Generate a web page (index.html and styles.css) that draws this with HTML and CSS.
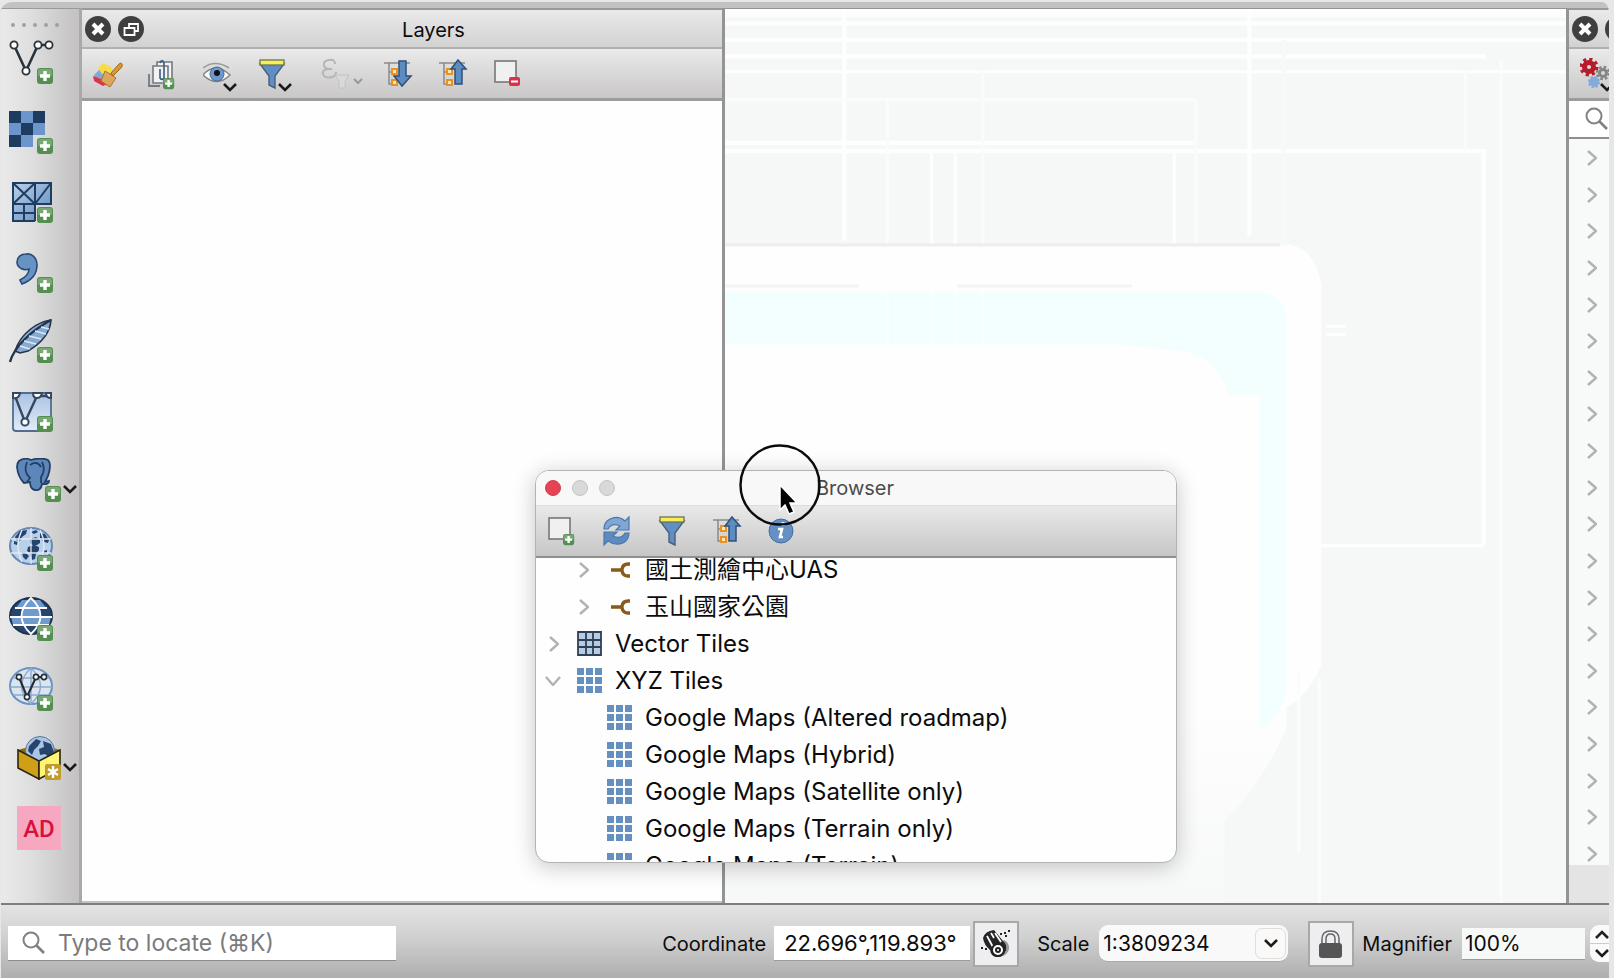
FILE: index.html
```html
<!DOCTYPE html>
<html lang="en">
<head>
<meta charset="utf-8">
<title>Layers and Browser</title>
<link rel="stylesheet" href="styles.css">
</head>
<body>
<svg class="defs" aria-hidden="true">
  <defs>
    <linearGradient id="blue" x1="0" y1="0" x2="1" y2="1"><stop offset="0" stop-color="#b9cfe8"/><stop offset="1" stop-color="#5f8cbf"/></linearGradient>
    <linearGradient id="pale" x1="0" y1="0" x2="0" y2="1"><stop offset="0" stop-color="#a9c2e2"/><stop offset="1" stop-color="#e2ecf8"/></linearGradient>
    <linearGradient id="fade" x1="0" y1="0" x2="0" y2="1"><stop offset="0" stop-color="#fdfefd"/><stop offset=".7" stop-color="#fdfefd"/><stop offset="1" stop-color="#f7f9f8"/></linearGradient>
    <g id="plus"><rect width="16" height="16" rx="3" fill="#558f50"/><path d="M1 8V3q0-2 2-2h10q2 0 2 2v5z" fill="#78a873"/><path d="M8 3v10M3 8h10" stroke="#fff" stroke-width="3.4"/></g>
    <g id="down"><path d="M1 1l6 6 6-6" fill="none" stroke="#1b1b1b" stroke-width="2.6"/></g>
    <g id="funnel"><path d="M1 5h24L16 17v12l-6-3v-9z" fill="#5f8fc4" stroke="#4a6078" stroke-width="1.4"/><rect x="1" y="1" width="24" height="5" fill="#f6ef58" stroke="#6e7254" stroke-width="1.3"/></g>
    <g id="tree"><path d="M0 3h26M5 3v21h5M5 12h5" fill="none" stroke="#8a8a8a" stroke-width="1.5"/><rect x="8" y="9" width="5" height="5" fill="#fce9b0" stroke="#e8932a" stroke-width="2"/><rect x="8" y="20" width="5" height="5" fill="#fce9b0" stroke="#e8932a" stroke-width="2"/></g>
    <g id="up"><path d="M19 1l8 9h-4v15h-7V10h-4z" fill="#5d8cc0" stroke="#2f5078" stroke-width="1.5"/></g>
    <g id="lens"><circle cx="9" cy="9" r="7.5" fill="none" stroke="#818181" stroke-width="2"/><path d="M14 14l8 8" stroke="#818181" stroke-width="2.6"/></g>
    <g id="tiles" fill="#658fbe"><path d="M0 0h7v7H0zM9 0h7v7H9zM18 0h7v7h-7zM0 9h7v7H0zM9 9h7v7H9zM18 9h7v7h-7zM0 18h7v7H0zM9 18h7v7H9zM18 18h7v7h-7z"/></g>
    <g id="share"><path d="M0 10h10M19 4h-2q-5 0-6 5v2q1 5 6 5h2" fill="none" stroke="#8a5a19" stroke-width="3.4"/></g>
    <g id="right"><path d="M1 1l8 7-8 7" fill="none" stroke="#b2b2b2" stroke-width="2.4"/></g>
    <g id="land"><path d="M6 10l5-6 7-1-1 4-4 3-2 4-4-1zM5 14l4 1-1 3-3-1zM13 25l4 1 3 3-3 4-3-3zM22 5l5-2 2 2-4 2zM21 12l6-2 4 3 0 3-3 2-3 1-4-3zM19 20l6-2 5 2 0 3-3 4-1 5-3 1-2-7-3-2zM31 6l5 1 4 6-1 3-4-1-4-4zM34 24l4-1 0 3-3 1z" fill="#27456c"/></g>
    <g id="close"><circle cx="13" cy="13" r="13" fill="#3f3f3f"/><path d="M8 8l10 10M18 8L8 18" stroke="#fff" stroke-width="4"/></g>
  </defs>
</svg>

<div class="app">
  <div class="workspace">
    <nav class="sources" aria-label="Add layer">
      <span class="grip" aria-hidden="true"><i></i><i></i><i></i><i></i><i></i></span>
      <div class="source-list">
      <button class="source" aria-label="Add vector layer"><svg viewBox="0 0 68 44"><path d="M5 5l12 26L29 5h11" fill="none" stroke="#28333b" stroke-width="2.6"/><g fill="#fff" stroke="#28333b" stroke-width="1.8"><circle cx="5" cy="5" r="3.6"/><circle cx="17" cy="31" r="3.6"/><circle cx="29" cy="5" r="3.6"/><circle cx="40" cy="5" r="3.6"/></g><use href="#plus" x="28" y="28"/></svg></button>
      <button class="source" aria-label="Add raster layer"><svg viewBox="0 0 68 44"><path d="M0 1h36v24H24v12H0z" fill="#6b95cb"/><path d="M0 1h12v12H0zM24 1h12v12H24zM12 13h12v12H12zM0 25h12v12H0z" fill="#1e3c60"/><use href="#plus" x="28" y="28"/></svg></button>
      <button class="source" aria-label="Add mesh layer"><svg viewBox="0 0 68 44"><path d="M4 4h38v21H26v17H4z" fill="url(#blue)"/><path d="M4 4h38v21H4zM4 4l22 21M26 4L4 25M26 4v38M42 4L26 25M4 25v17h22M4 34h22M15 25v17" fill="none" stroke="#1f3d63" stroke-width="2"/><use href="#plus" x="28" y="28"/></svg></button>
      <button class="source" aria-label="Add delimited text layer"><svg viewBox="0 0 68 44"><path d="M17 5c6-1 11 4 11 11 0 10-7 16-15 19l-2-4c6-3 9-6 9-11-5 2-12-1-12-7 0-5 4-8 9-8z" fill="#6792c4" stroke="#294a75" stroke-width="1.6"/><use href="#plus" x="28" y="28"/></svg></button>
      <button class="source" aria-label="Add SpatiaLite layer"><svg viewBox="0 0 68 44"><path d="M42 1C28 3 12 14 6 32l5 2 8-2C31 25 41 16 42 1z" fill="#86aad2" stroke="#25364c" stroke-width="1.6"/><path d="M1 43C5 28 22 12 42 1" fill="none" stroke="#25364c" stroke-width="2.4"/><path d="M11 27l10 3M15 22l12 3M20 17l12 3M26 12l11 3M32 8l8 2" stroke="#dce9f7" stroke-width="1.4"/><use href="#plus" x="28" y="28"/></svg></button>
      <button class="source" aria-label="Add virtual layer"><svg viewBox="0 0 68 44"><rect x="4" y="5" width="38" height="38" rx="3" fill="url(#pale)" stroke="#526d91" stroke-width="1.8"/><path d="M6 8l10 26L28 8h12" fill="none" stroke="#344961" stroke-width="2.4"/><g fill="#fff" stroke="#344961" stroke-width="2"><path d="M4 9V5h7q-1 6-7 5zM24 5h9q-1 5-5 5t-4-5zM37 5h5v5q-5 0-5-5z"/><circle cx="16" cy="34" r="3.6"/></g><use href="#plus" x="28" y="28"/></svg></button>
      <button class="source" aria-label="Add PostGIS layer"><svg viewBox="0 0 68 44"><path d="M10 3q6-4 12-1 10-3 17 0 4 4 0 16l-3 6 4-1q0 4-7 3-1 7-7 6-5-1-5-8l-6 1Q9 19 8 9q0-4 2-6z" fill="#5d87bb" stroke="#243f64" stroke-width="1.8"/><path d="M18 4q-4 10 3 16l-3 4M33 4q4 8-1 15v6M21 7q7-5 11 2" fill="none" stroke="#243f64" stroke-width="1.8"/><use href="#plus" x="36" y="28"/><use href="#down" x="54" y="27"/></svg></button>
      <button class="source" aria-label="Add WMS layer"><svg viewBox="0 0 68 44"><ellipse cx="22" cy="19" rx="21" ry="18" fill="#b9d0ea" stroke="#6489b5" stroke-width="2"/><use href="#land"/><path d="M2 12h40M2 26h40M22 1v36M13 3q-8 16 0 32M31 3q8 16 0 32" fill="none" stroke="#dfeaf7" stroke-width="1.3"/><use href="#plus" x="28" y="28"/></svg></button>
      <button class="source" aria-label="Add WCS layer"><svg viewBox="0 0 68 44"><ellipse cx="22" cy="19" rx="21" ry="18" fill="#26456d" stroke="#20334d" stroke-width="2"/><path d="M13 3h18l6 8H7zM2 20h40l-2 8H4zM13 11h18v9H13z" fill="#6f9bce"/><path d="M13 28h18l-9 8z" fill="#26456d"/><path d="M6 11h32M1 20h42M4 28h36M22 1q-19 18 0 36 19-18 0-36z" fill="none" stroke="#fff" stroke-width="1.8"/><use href="#plus" x="28" y="28"/></svg></button>
      <button class="source" aria-label="Add WFS layer"><svg viewBox="0 0 68 44"><ellipse cx="22" cy="19" rx="21" ry="18" fill="#dce5ee" stroke="#6a93c2" stroke-width="2"/><path d="M4 11h36M1 20h42M4 28h36M22 1v36M22 1q-19 18 0 36 19-18 0-36z" fill="none" stroke="#8aabd0" stroke-width="1.4"/><path d="M10 10l8 20 9-20h8" fill="none" stroke="#252f38" stroke-width="2.2"/><g fill="#fff" stroke="#252f38" stroke-width="1.6"><circle cx="10" cy="10" r="2.6"/><circle cx="18" cy="30" r="2.6"/><circle cx="27" cy="10" r="2.6"/><circle cx="35" cy="10" r="2.6"/></g><use href="#plus" x="28" y="28"/></svg></button>
      <button class="source" aria-label="New GeoPackage layer"><svg viewBox="0 0 68 44"><path d="M9 14l21-6 21 6-21 11z" fill="#8a6c10"/><circle cx="31" cy="15" r="14.500" fill="#a9c5e6" stroke="#54779f"/><path d="M20 10l7-7 5 2-3 5-4 4-2 5-4-4zM34 5l8 3 3 8-4 6-5-4-5 1-1-6 5-2z" fill="#27456c"/><path d="M9 14l21 11v18L9 32z" fill="#cf9f17" stroke="#2a2410" stroke-width="1.6"/><path d="M51 14L30 25v18l21-11z" fill="#fdf576" stroke="#2a2410" stroke-width="1.6"/><rect x="36" y="28" width="16" height="16" rx="2" fill="#c19c2a"/><path d="M44 30v12M39 33l10 6M49 33l-10 6" stroke="#fff" stroke-width="2.4"/><use href="#down" x="54" y="27"/></svg></button>
      <button class="source" aria-label="AD"><span class="ad">AD</span></button>
      </div>
    </nav>

    <section class="layers">
      <header class="panel-head">
        <button class="round" aria-label="Close"><svg viewBox="0 0 26 26"><use href="#close"/></svg></button>
        <button class="round" aria-label="Float"><svg viewBox="0 0 26 26"><circle cx="13" cy="13" r="13" fill="#3f3f3f"/><path d="M11 11V8h9v7h-3M6.500 12h10v7h-10z" fill="none" stroke="#fff" stroke-width="1.8"/></svg></button>
        <h2 class="panel-title">Layers</h2>
      </header>
      <div class="panel-tools">
        <button class="tool" aria-label="Styling"><svg viewBox="0 0 40 34"><path d="M1 17l9-9 12 5-7 15-12-4z" fill="#86a8d0"/><path d="M5 10l5-5 8 4 3 6-12 1z" fill="#f6dc4a"/><path d="M0 18l8 3 8 4-6 3-9-5z" fill="#dc3346"/><path d="M12 13l11 7-6 9-9-6z" fill="#dda55e" stroke="#a87434"/><path d="M18 15l8-9q2-2 3 0t-1 4l-8 8z" fill="#d89739" stroke="#a06c23"/></svg></button>
        <button class="tool" aria-label="Add group"><svg viewBox="0 0 40 34"><g fill="#f2f2f2" stroke="#727a80" stroke-width="1.6"><path d="M9 4h15v17H9z"/><path d="M5 8h15v17H5z"/></g><path d="M1 16v12h11" fill="none" stroke="#727a80" stroke-width="1.8"/><path d="M12 11v9q2 3 4 0V5q-2-5-4 0" fill="none" stroke="#365b80" stroke-width="1.6"/><use href="#plus" transform="translate(15 20) scale(.7)"/></svg></button>
        <button class="tool" aria-label="Map themes"><svg viewBox="0 0 40 34"><path d="M0 17Q12 3 27 17 14 30 0 17z" fill="#f8f8f8" stroke="#858585" stroke-width="1.5"/><path d="M0 10q12-9 26 0" fill="none" stroke="#9b9b9b" stroke-width="1.5"/><circle cx="14" cy="16" r="7" fill="#6d98cb" stroke="#48688f"/><circle cx="14" cy="15" r="3" fill="#111"/><use href="#down" x="20" y="25"/></svg></button>
        <button class="tool" aria-label="Filter legend"><svg viewBox="0 0 40 34"><use href="#funnel" x="1" y="1"/><use href="#down" x="20" y="25"/></svg></button>
        <button class="tool tool-wide" aria-label="Filter by expression" disabled><svg viewBox="0 0 56 34"><path d="M22 6q0-5-6-4-6 1-5 5 0 4 6 4-8 0-7 5 2 5 9 3 4-1 4-5M16 11h3" fill="none" stroke="#b5b5b5" stroke-width="2"/><path d="M22 17h14l-4 7v6h-6v-6z" fill="#d9d9d9" stroke="#c2c2c2"/><path d="M41 21l4 4 4-4" fill="none" stroke="#999" stroke-width="2"/></svg></button>
        <button class="tool" aria-label="Expand all"><svg viewBox="0 0 40 34"><use href="#tree" x="0" y="2"/><path d="M15 3h7v15h5l-9 10-8-10h5z" fill="#5d8cc0" stroke="#2f5078" stroke-width="1.5"/></svg></button>
        <button class="tool" aria-label="Collapse all"><svg viewBox="0 0 40 34"><use href="#tree" x="0" y="2"/><use href="#up" y="1"/></svg></button>
        <button class="tool" aria-label="Remove layer"><svg viewBox="0 0 40 34"><rect x="1" y="3" width="21" height="21" fill="#f0f0f0" stroke="#777" stroke-width="1.6"/><rect x="15" y="19" width="11" height="9" rx="2" fill="#d8314c"/><path d="M17 23.500h7" stroke="#fff" stroke-width="2"/></svg></button>
      </div>
      <div class="layer-tree"></div>
    </section>

    <main class="canvas">
      <svg class="map" viewBox="704 10 818 868" preserveAspectRatio="none" aria-hidden="true">
        <rect x="704" y="10" width="818" height="868" fill="#f6f8f7"/>
        <path d="M704 10h818v8H704z" fill="#fdfdfd"/>
        <g stroke="#fdfefe" stroke-width="4"><path d="M820 10v225M1214 10v220M1442 148v383M704 24h818M704 40h818M704 56h740M704 140h458M704 148h740"/><path d="M905 148v90M928 148v90M1141 148v90M704 71h818" stroke-width="3"/></g>
        <g stroke="#fafbfb" stroke-width="3"><path d="M862 98v140M955 70v170M1162 98v140M1424 70v78M1459 60v818M704 98h458"/></g>
        <g stroke="#fdfefe" stroke-width="3"><path d="M1222 531h220M1288 318h20M1288 326h20"/></g>
        <path d="M704 238h540q34 0 40 40v370q-14 30-34 40v20q-20 50-60 90v80H704z" fill="url(#fade)"/>
        <path d="M704 239h540" stroke="#eeeeec" stroke-width="3"/>
        <path d="M704 284h520q26 4 26 30v360q-10 30-26 35V385h-30q-12-38-45-43l-60-6H704z" fill="#f3feff"/>
        <path d="M1247 40v200" stroke="#f4fafa" stroke-width="4"/>
        <path d="M704 279h130M930 279h170" stroke="#f4f4f4" stroke-width="3"/>
        <path d="M862 284v52M905 284v52M928 284v52M955 284v52" stroke="#f8ffff" stroke-width="3"/>
        <path d="M1282 660v218M1262 650v180" stroke="#fcfcfc" stroke-width="3"/>
      </svg>
    </main>

    <aside class="toolbox">
      <header class="panel-head"><button class="round" aria-label="Close toolbox"><svg viewBox="0 0 26 26"><use href="#close"/></svg></button><button class="round" aria-label="Float toolbox"><svg viewBox="0 0 26 26"><use href="#close"/></svg></button></header>
      <div class="panel-tools"><button class="tool" aria-label="Models"><svg viewBox="0 0 40 34"><g fill="none"><circle cx="9" cy="9" r="4.500" stroke="#b61c2b" stroke-width="5"/><circle cx="9" cy="9" r="7.500" stroke="#b61c2b" stroke-width="4" stroke-dasharray="3 2.890"/><circle cx="23" cy="15" r="3.500" stroke="#858585" stroke-width="3"/><circle cx="23" cy="15" r="6" stroke="#858585" stroke-width="2.400" stroke-dasharray="2.600 2.100"/><circle cx="14" cy="24" r="2.500" stroke="#85acd9" stroke-width="5"/><circle cx="14" cy="24" r="5" stroke="#85acd9" stroke-width="2.400" stroke-dasharray="2.200 1.700"/></g><use href="#down" x="20" y="25"/></svg></button></div>
      <button class="finder" aria-label="Search toolbox"><svg viewBox="0 0 24 24"><use href="#lens"/></svg></button>
      <div class="groups">
        <button class="group" aria-label="Expand"><svg viewBox="0 0 10 16"><use href="#right"/></svg></button><button class="group" aria-label="Expand"><svg viewBox="0 0 10 16"><use href="#right"/></svg></button><button class="group" aria-label="Expand"><svg viewBox="0 0 10 16"><use href="#right"/></svg></button><button class="group" aria-label="Expand"><svg viewBox="0 0 10 16"><use href="#right"/></svg></button><button class="group" aria-label="Expand"><svg viewBox="0 0 10 16"><use href="#right"/></svg></button>
        <button class="group" aria-label="Expand"><svg viewBox="0 0 10 16"><use href="#right"/></svg></button><button class="group" aria-label="Expand"><svg viewBox="0 0 10 16"><use href="#right"/></svg></button><button class="group" aria-label="Expand"><svg viewBox="0 0 10 16"><use href="#right"/></svg></button><button class="group" aria-label="Expand"><svg viewBox="0 0 10 16"><use href="#right"/></svg></button><button class="group" aria-label="Expand"><svg viewBox="0 0 10 16"><use href="#right"/></svg></button>
        <button class="group" aria-label="Expand"><svg viewBox="0 0 10 16"><use href="#right"/></svg></button><button class="group" aria-label="Expand"><svg viewBox="0 0 10 16"><use href="#right"/></svg></button><button class="group" aria-label="Expand"><svg viewBox="0 0 10 16"><use href="#right"/></svg></button><button class="group" aria-label="Expand"><svg viewBox="0 0 10 16"><use href="#right"/></svg></button><button class="group" aria-label="Expand"><svg viewBox="0 0 10 16"><use href="#right"/></svg></button>
        <button class="group" aria-label="Expand"><svg viewBox="0 0 10 16"><use href="#right"/></svg></button><button class="group" aria-label="Expand"><svg viewBox="0 0 10 16"><use href="#right"/></svg></button><button class="group" aria-label="Expand"><svg viewBox="0 0 10 16"><use href="#right"/></svg></button><button class="group" aria-label="Expand"><svg viewBox="0 0 10 16"><use href="#right"/></svg></button><button class="group" aria-label="Expand"><svg viewBox="0 0 10 16"><use href="#right"/></svg></button>
      </div>
      <div class="toolbox-end"></div>
    </aside>
  </div>

  <footer class="status">
    <label class="locator"><svg viewBox="0 0 24 24" aria-hidden="true"><use href="#lens"/></svg><input class="locator-input" type="text" placeholder="Type to locate (⌘K)" aria-label="Type to locate"></label>
    <label class="status-label push" for="coord">Coordinate</label>
    <input class="field field-coord" id="coord" type="text" value="22.696°,119.893°">
    <button class="square" aria-label="Toggle extents"><svg viewBox="0 0 30 30"><path d="M10 21q6 10 14 5 7-6 2-13l-3-2z" fill="#9a9a9a"/><path d="M2 9Q4 2 13 1l9 11q4 3 3 9-3 8-10 7-5-1-6-7Q3 16 2 9z" fill="#252525"/><path d="M6 7l6 11M10 4l3 5M14 4l6 9" stroke="#fff" stroke-width="1.800"/><circle cx="17" cy="21" r="6" fill="#fff" stroke="#222" stroke-width="2"/><circle cx="17" cy="21" r="2" fill="none" stroke="#222" stroke-width="2"/><path d="M19 5h2M23 4h2M27 2h2M24 7h2M0 19h2M4 20h2" stroke="#222" stroke-width="2"/></svg></button>
    <label class="status-label scale-label" for="scale">Scale</label>
    <span class="combo"><select class="combo-select" id="scale"><option>1:3809234</option></select><span class="combo-arrow"><svg viewBox="0 0 14 9"><use href="#down"/></svg></span></span>
    <button class="square lock" aria-label="Lock scale"><svg viewBox="0 0 30 30"><path d="M6 16V10q0-8 8.500-8T23 10v6M10 16v-6q0-5 4.500-5t4.500 5v6" fill="none" stroke="#666" stroke-width="1.5"/><rect x="3" y="14" width="23" height="15" rx="3" fill="#555"/></svg></button>
    <label class="status-label" for="magnifier">Magnifier</label>
    <input class="field field-mag" id="magnifier" type="text" value="100%">
    <span class="spin"><button class="step" aria-label="Increase"><svg viewBox="0 0 14 9"><path d="M1 8l6-6 6 6" fill="none" stroke="#222" stroke-width="2.600"/></svg></button><button class="step" aria-label="Decrease"><svg viewBox="0 0 14 9"><use href="#down"/></svg></button></span>
  </footer>

  <section class="browser" aria-label="Browser">
    <header class="browser-head">
      <button class="light light-red" aria-label="Close"></button><button class="light" aria-label="Minimise"></button><button class="light" aria-label="Zoom"></button>
      <h2 class="browser-title">Browser</h2>
    </header>
    <div class="browser-tools">
      <button class="tool" aria-label="Add selected layers"><svg viewBox="0 0 40 34"><rect x="1" y="4" width="21" height="21" fill="#f0f0f0" stroke="#777" stroke-width="1.600"/><use href="#plus" transform="translate(15 20) scale(.7)"/></svg></button>
      <button class="tool" aria-label="Refresh"><svg viewBox="0 0 40 34"><path d="M1 15Q1 8 7 5q8-4 15 2l4-4v13H13l4-4Q9 8 5 15z" fill="#7fa6d5" stroke="#4b78ac" stroke-width="1.200"/><path d="M26 19q0 7-6 10-8 3-15-2l-4 4V18h13l-4 4q8 4 12-3z" fill="#5c8bc0" stroke="#4b78ac" stroke-width="1.200"/></svg></button>
      <button class="tool" aria-label="Filter browser"><svg viewBox="0 0 40 34"><use href="#funnel" x="1" y="2"/></svg></button>
      <button class="tool" aria-label="Collapse all"><svg viewBox="0 0 40 34"><use href="#tree" x="0" y="3"/><use href="#up" y="2"/></svg></button>
      <button class="tool" aria-label="Properties"><svg viewBox="0 0 40 34"><circle cx="13" cy="17" r="12" fill="#6490c4" stroke="#466f9f"/><circle cx="15" cy="10" r="2" fill="#fff"/><path d="M10 15h4l-2 8h3" fill="none" stroke="#fff" stroke-width="2.600"/></svg></button>
    </div>
    <ul class="tree">
      <li class="row row-child"><button class="twist" aria-label="Expand"><svg viewBox="0 0 10 16"><use href="#right"/></svg></button><svg class="share" viewBox="0 0 20 20"><use href="#share"/></svg><span class="name">國土測繪中心UAS</span></li>
      <li class="row row-child"><button class="twist" aria-label="Expand"><svg viewBox="0 0 10 16"><use href="#right"/></svg></button><svg class="share" viewBox="0 0 20 20"><use href="#share"/></svg><span class="name">玉山國家公園</span></li>
      <li class="row"><button class="twist" aria-label="Expand"><svg viewBox="0 0 10 16"><use href="#right"/></svg></button><svg class="grid" viewBox="0 0 25 25"><path d="M1 1h23v23H1z" fill="#b7cce3"/><path d="M1 1h23v23H1zM9 1v23M16 1v23M1 9h23M1 16h23" fill="none" stroke="#2d4055" stroke-width="1.800"/></svg><span class="name">Vector Tiles</span></li>
      <li class="row"><button class="twist" aria-label="Collapse"><svg class="open" viewBox="0 0 16 10"><path d="M1 1l7 8 7-8" fill="none" stroke="#b2b2b2" stroke-width="2.400"/></svg></button><svg class="grid" viewBox="0 0 25 25"><use href="#tiles"/></svg><span class="name">XYZ Tiles</span></li>
      <li class="row row-leaf"><svg class="grid" viewBox="0 0 25 25"><use href="#tiles"/></svg><span class="name">Google Maps (Altered roadmap)</span></li>
      <li class="row row-leaf"><svg class="grid" viewBox="0 0 25 25"><use href="#tiles"/></svg><span class="name">Google Maps (Hybrid)</span></li>
      <li class="row row-leaf"><svg class="grid" viewBox="0 0 25 25"><use href="#tiles"/></svg><span class="name">Google Maps (Satellite only)</span></li>
      <li class="row row-leaf"><svg class="grid" viewBox="0 0 25 25"><use href="#tiles"/></svg><span class="name">Google Maps (Terrain only)</span></li>
      <li class="row row-leaf"><svg class="grid" viewBox="0 0 25 25"><use href="#tiles"/></svg><span class="name">Google Maps (Terrain)</span></li>
    </ul>
  </section>

  <svg class="pointer" viewBox="0 0 84 84" aria-hidden="true"><circle cx="42" cy="42" r="39.500" fill="none" stroke="#0b0b0b" stroke-width="2.400"/><path d="M42 42v25l5-5 4 9 5-2-4-9h7z" fill="#000" stroke="#fff" stroke-width="1.500"/></svg>
</div>
</body>
</html>
```
FILE: styles.css
```css
* { box-sizing: border-box; }
body { margin: 0; background: #e7e7e7; color: #0c0c0c; font-family: Inter, "Noto Sans CJK TC", sans-serif; font-size: 21px; }
button { display: flex; margin: 0; padding: 0; border: 0; background: none; font: inherit; color: inherit; }
input, select { font: inherit; color: inherit; }
h2, ul { margin: 0; padding: 0; font-weight: 400; }
svg { display: block; flex: none; }
.defs { position: absolute; width: 0; height: 0; }

.app { position: relative; display: flex; flex-direction: column; height: 100vh; border: solid #e7e7e7; border-width: 2px 5px 0 1px; border-radius: 12px 12px 0 0; overflow: hidden; background: #c2c2c2; }
.workspace { flex: 1; display: flex; min-height: 0; padding-top: 6px; border-bottom: 2px solid #7e7e7e; }

.sources { flex: none; width: 81px; display: flex; flex-direction: column; gap: 13px; padding: 14px 0 53px 8px; border-top: 1px solid #999; border-right: 3px solid #a9a9a9; background: linear-gradient(90deg, #eaeaea, #dedede 40%, #c3c1c1); }
.grip { display: flex; gap: 7px; height: 4px; padding-left: 2px; }
.grip i { width: 4px; height: 4px; border-radius: 2px; background: #a0a0a0; }
.source-list { flex: 1; display: flex; flex-direction: column; justify-content: space-between; }
.source svg { width: 68px; height: 44px; }
.ad { width: 44px; height: 44px; margin-left: 8px; background: #f6a8c0; color: #d8103c; font: 500 24px/46px Roboto, sans-serif; text-align: center; }

.layers { flex: none; width: 640px; display: flex; flex-direction: column; }
.panel-head { flex: none; display: flex; align-items: center; gap: 7px; height: 41px; padding-left: 3px; border-top: 2px solid #999; border-bottom: 2px solid #b0b0b0; background: linear-gradient(#eaeaea, #d2d2d2); }
.round svg { width: 26px; height: 26px; }
.panel-title { flex: 1; padding: 2px 6px 0 0; font-size: 20px; line-height: 24px; text-align: center; }
.panel-tools { flex: none; display: flex; align-items: center; gap: 15px; height: 52px; padding: 3px 0 0 11px; border-bottom: 3px solid #9c9c9c; background: linear-gradient(#eaeaea, #c9c7c7); }
.tool svg { width: 40px; height: 34px; }
.tool-wide svg { width: 56px; }
.layer-tree { flex: 1; margin-bottom: 2px; background: #fefefe; }

.canvas { flex: 1; min-width: 0; display: flex; border: solid #949494; border-width: 1px 3px 0 3px; }
.map { width: 100%; height: 100%; }

.toolbox { flex: none; width: 40px; display: flex; flex-direction: column; overflow: hidden; background: #fff; }
.finder { height: 38px; align-items: center; padding-left: 16px; border-bottom: 2px solid #8e8e8e; }
.finder svg { width: 24px; height: 24px; }
.groups { flex: 1; display: flex; flex-direction: column; justify-content: space-between; padding: 11px 0 3px 18px; background: #f8f9f9; }
.group svg { width: 10px; height: 16px; }
.toolbox-end { height: 38px; background: #e4e4e4; }

.status { flex: none; display: flex; align-items: center; height: 73px; padding: 4px 0 0 7px; overflow: hidden; background: linear-gradient(#e2e3e2, #d0d0d0 45%, #aeaeae); }
.locator { display: flex; align-items: center; gap: 12px; width: 388px; height: 35px; padding-left: 14px; background: #fff; border-bottom: 1px solid #8c8c8c; }
.locator svg { width: 24px; height: 24px; }
.locator-input { flex: 1; min-width: 0; padding: 0; border: 0; background: none; font-size: 23px; }
.locator-input::placeholder { color: #7b7b7b; opacity: 1; }
.status-label { font-size: 20px; line-height: 24px; }
.push { margin-left: auto; }
.field { height: 35px; border: 0; border-bottom: 1px solid #9b9b9b; border-radius: 0; background: #fff; font-size: 21px; }
.field-coord { width: 196px; margin: 0 3px 0 8px; padding: 0 10px; font-size: 22px; }
.field-mag { width: 123px; height: 32px; margin: 0 5px 0 10px; padding: 0 3px; background: #f7f9f8; }
.square { flex: none; width: 46px; height: 46px; align-items: center; justify-content: center; border: 2px solid #a8a8a8; background: #eeedf0; }
.square svg { width: 30px; height: 30px; }
.scale-label { margin: 0 10px 0 18px; }
.combo { position: relative; width: 189px; height: 37px; }
.combo-select { width: 100%; height: 100%; padding: 0 4px; border: 0; border-bottom: 1px solid #aaa; border-radius: 9px; background: #f9f9f9; font-size: 21px; appearance: none; }
.combo-arrow { position: absolute; right: 2px; top: 3px; width: 31px; height: 31px; display: flex; align-items: center; justify-content: center; border: 1px solid #ddd; border-radius: 7px; background: #faf9f7; pointer-events: none; }
.combo-arrow svg { width: 14px; height: 9px; }
.lock { margin: 0 8px 0 20px; }
.spin { flex: none; width: 19px; height: 37px; display: flex; flex-direction: column; border-radius: 9px 0 0 9px; background: #fafafa; overflow: hidden; }
.step { flex: 1; align-items: center; padding-left: 5px; }
.step + .step { border-top: 1px solid #ccc; }
.step svg { width: 14px; height: 9px; }

.browser { position: absolute; left: 534px; top: 468px; width: 642px; height: 393px; display: flex; flex-direction: column; overflow: hidden; border: 1px solid #b3b3b3; border-radius: 14px; background: #fefefe; box-shadow: 0 4px 22px rgba(0, 0, 0, .22); }
.browser-head { flex: none; display: flex; align-items: center; gap: 11px; height: 35px; padding-left: 9px; background: #f8f8f8; border-bottom: 1px solid #ddd; }
.light { width: 16px; height: 16px; border: 1px solid #c3c3c3; border-radius: 8px; background: #d9d9d9; }
.light-red { border-color: #d93b4c; background: #e64356; }
.browser-title { flex: 1; padding-right: 92px; color: #4c4c4c; font-size: 20px; line-height: 24px; text-align: center; }
.browser-tools { flex: none; display: flex; align-items: center; gap: 15px; height: 52px; padding-left: 12px; border-bottom: 2px solid #8f8f8f; background: linear-gradient(#e9e9e9, #c6c6c6); }
.tree { flex: 1; min-height: 0; overflow: hidden; list-style: none; margin-top: -7px; }
.row { display: flex; align-items: center; height: 37px; padding-left: 11px; }
.row-child { padding-left: 41px; }
.row-leaf { padding-left: 71px; }
.twist { flex: none; width: 30px; padding-left: 2px; }
.twist svg { width: 10px; height: 16px; }
.twist .open { width: 16px; height: 10px; margin-left: -4px; }
.share { width: 20px; height: 20px; margin: 0 14px 0 4px; }
.grid { width: 25px; height: 25px; margin-right: 13px; }
.name { font-size: 24px; line-height: 32px; white-space: nowrap; }
.pointer { position: absolute; left: 737px; top: 441px; width: 84px; height: 84px; }
```
